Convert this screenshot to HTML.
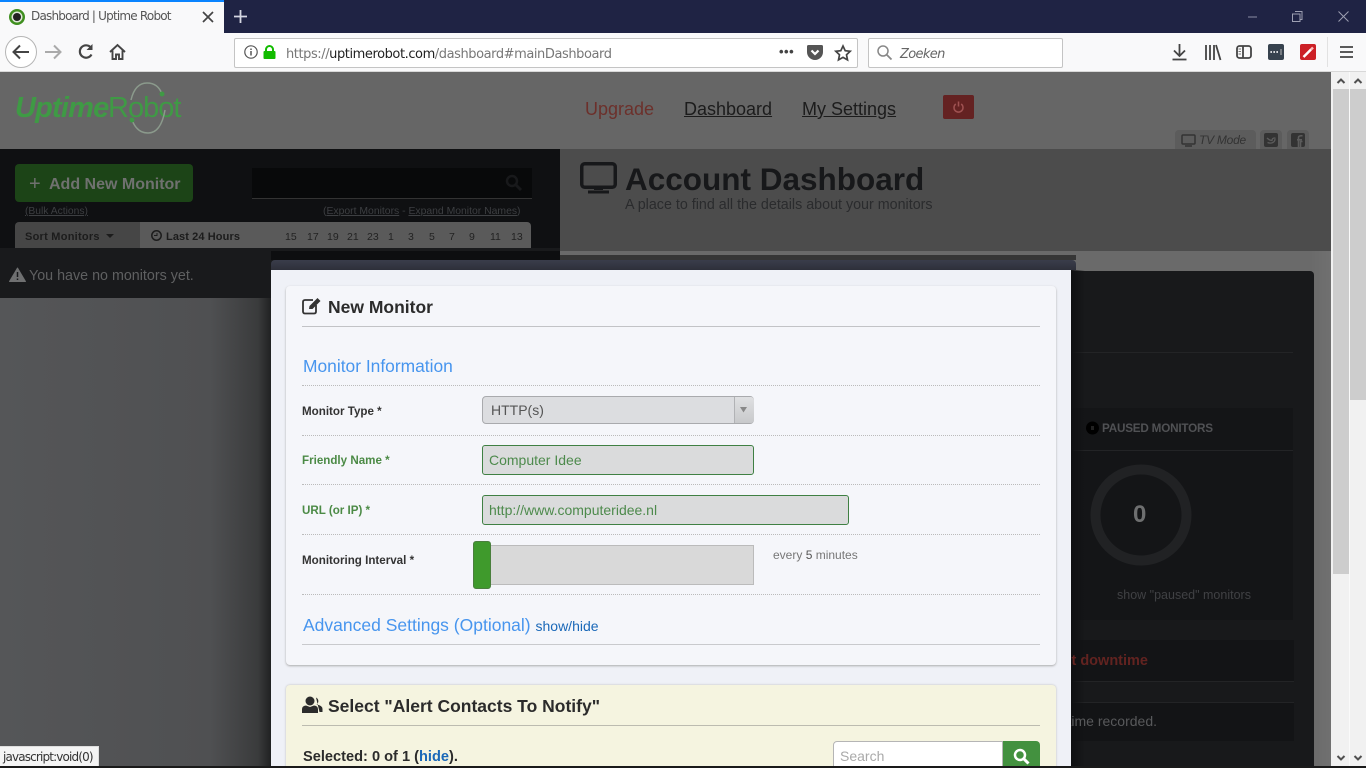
<!DOCTYPE html>
<html><head><meta charset="utf-8"><title>Dashboard | Uptime Robot</title>
<style>
html,body{margin:0;padding:0;width:1366px;height:768px;overflow:hidden;background:#666;font-family:"Liberation Sans",sans-serif}
#r{position:relative;width:1366px;height:768px;overflow:hidden}
.a{position:absolute}
.t{position:absolute;white-space:nowrap;line-height:1}
svg{position:absolute;overflow:visible}
.dot{position:absolute;left:302px;width:738px;height:0;border-top:1px dotted #bbb}
.n{position:absolute;top:232px;line-height:1;font-size:10.5px;color:#222}
</style></head><body><div id="r">

<!-- browser chrome -->
<div class="a" style="left:0;top:0;width:1366px;height:33px;background:#1f2344"></div>
<div class="a" style="left:0;top:0;width:224px;height:33px;background:#f9f9fa"></div>
<div class="a" style="left:0;top:0;width:224px;height:2px;background:#0a84ff"></div>
<div class="a" style="left:0;top:33px;width:1366px;height:39px;background:#f9f9fa"></div>
<div class="a" style="left:0;top:71px;width:1366px;height:1px;background:#d8d8d8"></div>

<svg style="left:9px;top:9px" width="16" height="16"><circle cx="8" cy="8" r="8" fill="#3f8f1f"/><circle cx="8" cy="8" r="5.5" fill="#dfe8d8"/><circle cx="8" cy="8" r="4" fill="#222"/></svg>
<div class="t" style="left:31px;top:10px;font-size:12px;color:#555;font-family:'DejaVu Sans',sans-serif;letter-spacing:-.8px">Dashboard | Uptime Robot</div>
<svg style="left:203px;top:12px" width="10" height="10"><path d="M0 0L10 10M10 0L0 10" stroke="#444" stroke-width="1.7"/></svg>
<svg style="left:234px;top:10px" width="13" height="13"><path d="M6.500 0V13M0 6.500H13" stroke="#d5d7e2" stroke-width="1.800"/></svg>

<svg style="left:1248px;top:16px" width="10" height="2"><path d="M0 1H9" stroke="#8b8da3"/></svg>
<svg style="left:1292px;top:11px" width="11" height="11"><path d="M3 .5H10V8.500H8M.5 3H8V10.500H.5Z" stroke="#9d9fb2" fill="none"/></svg>
<svg style="left:1338px;top:11px" width="11" height="11"><path d="M.5 .5L10.500 10.500M10.500 .5L.5 10.500" stroke="#9d9fb2"/></svg>

<!-- nav -->
<svg style="left:5px;top:36px" width="32" height="32"><circle cx="16" cy="16" r="15.500" fill="#fff" stroke="#b5b5b5"/><path d="M24 16H9M15 9.500L8.500 16L15 22.500" fill="none" stroke="#444" stroke-width="2"/></svg>
<svg style="left:45px;top:44px" width="17" height="16"><path d="M0 8H15M9 1.500L15.500 8L9 14.500" fill="none" stroke="#aaa" stroke-width="2"/></svg>
<svg style="left:78px;top:44px" width="16" height="16"><path d="M13.500 10.500A6.200 6.200 0 1 1 12.800 3.500" fill="none" stroke="#444" stroke-width="2.200"/><path d="M14.500 0V6H8.500Z" fill="#444"/></svg>
<svg style="left:109px;top:44px" width="17" height="16"><path d="M1 8L8.500 1L16 8M3.500 6.500V15H7V10.500H10V15H13.500V6.500" fill="none" stroke="#444" stroke-width="1.900"/></svg>

<div class="a" style="left:234px;top:38px;width:622px;height:28px;background:#fff;border:1px solid #c4c4c4;border-radius:2px"></div>
<svg style="left:244px;top:45px" width="14" height="14"><circle cx="7" cy="7" r="6.200" fill="none" stroke="#555" stroke-width="1.200"/><path d="M7 6V10.500M7 3.500V5" stroke="#555" stroke-width="1.500"/></svg>
<svg style="left:263px;top:45px" width="13" height="14"><path d="M3 6V4.500A3.500 3.500 0 0 1 10 4.500V6" fill="none" stroke="#12bc00" stroke-width="2"/><rect x="0.500" y="6" width="12" height="8" rx="1" fill="#12bc00"/></svg>
<div class="t" style="left:286px;top:48px;font-size:13px;font-family:'DejaVu Sans',sans-serif;letter-spacing:-.43px;color:#777">https://<span style="color:#222">uptimerobot.com</span>/dashboard#mainDashboard</div>
<div class="t" style="left:779px;top:45px;font-size:13px;font-weight:bold;color:#444;letter-spacing:.5px">•••</div>
<svg style="left:807px;top:45px" width="16" height="15"><path d="M1.500 0H14.500A1.500 1.500 0 0 1 16 1.500V7A8 8 0 0 1 0 7V1.500A1.500 1.500 0 0 1 1.500 0Z" fill="#555"/><path d="M4.500 5.500L8 9L11.500 5.500" fill="none" stroke="#fff" stroke-width="2.200"/></svg>
<svg style="left:835px;top:45px" width="16" height="16"><path d="M8 1L10.200 5.700L15.200 6.300L11.500 9.800L12.500 14.900L8 12.400L3.500 14.900L4.500 9.800L.8 6.300L5.800 5.700Z" fill="none" stroke="#444" stroke-width="1.700"/></svg>

<div class="a" style="left:868px;top:38px;width:193px;height:28px;background:#fff;border:1px solid #c4c4c4;border-radius:2px"></div>
<svg style="left:877px;top:45px" width="15" height="15"><circle cx="6" cy="6" r="5" fill="none" stroke="#888" stroke-width="1.500"/><path d="M9.500 9.500L14.500 14.500" stroke="#888" stroke-width="1.800"/></svg>
<div class="t" style="left:900px;top:48px;font-size:13px;font-style:italic;font-family:'DejaVu Sans',sans-serif;letter-spacing:-.65px;color:#666">Zoeken</div>

<svg style="left:1172px;top:44px" width="15" height="17"><path d="M7.500 0V11M2 6.500L7.500 12L13 6.500" fill="none" stroke="#444" stroke-width="1.800"/><path d="M.5 15.500H14.500" stroke="#444" stroke-width="1.800"/></svg>
<svg style="left:1205px;top:45px" width="16" height="15"><path d="M1 0V15M5 0V15M9 0V15M11 0L15.500 15" stroke="#444" stroke-width="1.800"/></svg>
<svg style="left:1236px;top:45px" width="16" height="14"><rect x="1" y="1" width="14" height="12" rx="2.500" fill="none" stroke="#444" stroke-width="1.800"/><path d="M7 1V13" stroke="#444" stroke-width="1.800"/><path d="M2.500 4H5M2.500 6.500H5M2.500 9H5" stroke="#777"/></svg>
<svg style="left:1268px;top:44px" width="16" height="16"><rect width="16" height="16" rx="2" fill="#37424e"/><path d="M2.500 8H3.800M5.500 8H6.800M8.500 8H9.800" stroke="#fff" stroke-width="2"/><path d="M13 5V11" stroke="#bbb"/></svg>
<svg style="left:1300px;top:44px" width="16" height="16"><rect width="16" height="16" rx="2" fill="#cc2026"/><path d="M3.500 13L11 5.500" stroke="#fff" stroke-width="2.500"/><path d="M11 5.500L13 3.500" stroke="#fbb" stroke-width="2.500"/></svg>
<div class="a" style="left:1327px;top:37px;width:1px;height:30px;background:#e2e2e2"></div>
<svg style="left:1340px;top:46px" width="13" height="12"><path d="M0 1H13M0 6H13M0 11H13" stroke="#444" stroke-width="1.700"/></svg>

<!-- dimmed page -->
<div class="a" style="left:0;top:72px;width:1331px;height:696px;background:#666"></div>
<div class="t" style="left:15px;top:94px;font-size:29px;font-weight:bold;font-style:italic;color:#3f9a45;letter-spacing:-.8px">Uptime</div>
<div class="t" style="left:108px;top:94px;font-size:29px;color:#3f9a45;letter-spacing:-1px">Robot</div>
<svg style="left:125px;top:82px" width="44" height="52"><path d="M6 18Q10 1 22 1Q33 1 37 12M7 38Q12 51 23 51Q36 51 40 28" fill="none" stroke="#8b9a8c" stroke-width="1.500"/><circle cx="37" cy="12" r="2.500" fill="#3f9a45"/><circle cx="7" cy="38" r="2.500" fill="#3f9a45"/></svg>

<div class="t" style="left:585px;top:100px;font-size:18px;color:#6c302b">Upgrade</div>
<div class="t" style="left:684px;top:100px;font-size:18px;color:#1c1c1c;text-decoration:underline">Dashboard</div>
<div class="t" style="left:802px;top:100px;font-size:18px;color:#1c1c1c;text-decoration:underline">My Settings</div>
<div class="a" style="left:943px;top:95px;width:31px;height:24px;background:#642222;border-radius:2px"></div>
<svg style="left:953px;top:101px" width="11" height="12"><path d="M2.800 3A4.500 4.500 0 1 0 8.200 3" fill="none" stroke="#a05252" stroke-width="1.500"/><path d="M5.500 .5V5.500" stroke="#a05252" stroke-width="1.500"/></svg>

<div class="a" style="left:1175px;top:130px;width:81px;height:19px;background:#5c5c5c;border-radius:4px 4px 0 0"></div>
<svg style="left:1181px;top:134px" width="15" height="13"><rect x="1" y="1" width="13" height="9" rx="1" fill="none" stroke="#333" stroke-width="1.500"/><path d="M4 12H11" stroke="#333" stroke-width="1.500"/></svg>
<div class="t" style="left:1199px;top:134px;font-size:12px;font-style:italic;color:#333;letter-spacing:-.25px">TV Mode</div>
<div class="a" style="left:1260px;top:130px;width:22px;height:19px;background:#5c5c5c;border-radius:4px 4px 0 0"></div>
<div class="a" style="left:1287px;top:130px;width:22px;height:19px;background:#5c5c5c;border-radius:4px 4px 0 0"></div>
<svg style="left:1264px;top:133px" width="14" height="14"><rect width="14" height="14" rx="2" fill="#333"/><path d="M3 5C5 7 7 7.500 8 7.500C8 5 10.500 4.500 11.500 5.500M3.500 9.500C7 11 11 9.500 11 6" fill="none" stroke="#5c5c5c" stroke-width="1.300"/></svg>
<svg style="left:1291px;top:133px" width="14" height="14"><rect width="14" height="14" rx="2" fill="#333"/><path d="M9.500 14V8.500H11.500M7.500 14V4.500Q7.500 2.500 11.500 2.800M6 6.800H11" fill="none" stroke="#5c5c5c" stroke-width="1.600"/></svg>

<!-- sidebar -->
<div class="a" style="left:0;top:149px;width:560px;height:149px;background:#0f1012"></div>
<div class="a" style="left:15px;top:164px;width:178px;height:38px;background:#1c4417;border-radius:4px"></div>
<div class="t" style="left:29px;top:175px;font-size:16px;font-weight:bold;color:#6f716f;margin-top:-2px"><span style="font-weight:normal;font-size:20px;position:relative;top:1px">+</span>&nbsp; Add New Monitor</div>
<div class="a" style="left:252px;top:168px;width:280px;height:30px;background:#08090a;border-bottom:1px solid #333"></div>
<svg style="left:505px;top:174px" width="17" height="17"><circle cx="7" cy="7" r="5" fill="none" stroke="#18191b" stroke-width="2.500"/><path d="M11 11L16 16" stroke="#18191b" stroke-width="3"/></svg>
<div class="t" style="left:25px;top:207px;font-size:10.3px;color:#3d3f42;text-decoration:underline">(Bulk Actions)</div>
<div class="t" style="left:323px;top:207px;font-size:10.4px;color:#3d3f42">(<u>Export Monitors</u> - <u>Expand Monitor Names</u>)</div>
<div class="a" style="left:15px;top:222px;width:125px;height:26px;background:#464646;border-radius:4px 0 0 0"></div>
<div class="a" style="left:140px;top:222px;width:391px;height:26px;background:#5a5a5a;border-radius:0 4px 0 0"></div>
<div class="t" style="left:25px;top:232px;font-size:11px;font-weight:bold;color:#1c1c1c;letter-spacing:.25px">Sort Monitors</div>
<svg style="left:106px;top:234px" width="8" height="5"><path d="M0 0H8L4 4Z" fill="#1c1c1c"/></svg>
<svg style="left:151px;top:230px" width="11" height="11"><circle cx="5.500" cy="5.500" r="4.700" fill="none" stroke="#1c1c1c" stroke-width="1.500"/><path d="M3 5.500H6V3" fill="none" stroke="#1c1c1c"/></svg>
<div class="t" style="left:166px;top:232px;font-size:11px;font-weight:bold;color:#1c1c1c;letter-spacing:.1px">Last 24 Hours</div>
<div class="n" style="left:285px">15</div>
<div class="n" style="left:307px">17</div>
<div class="n" style="left:327px">19</div>
<div class="n" style="left:347px">21</div>
<div class="n" style="left:367px">23</div>
<div class="n" style="left:388px">1</div>
<div class="n" style="left:408px">3</div>
<div class="n" style="left:429px">5</div>
<div class="n" style="left:449px">7</div>
<div class="n" style="left:469px">9</div>
<div class="n" style="left:490px">11</div>
<div class="n" style="left:511px">13</div>
<div class="a" style="left:0;top:248px;width:560px;height:50px;background:#191a1c"></div>
<svg style="left:9px;top:267px" width="17" height="15"><path d="M8.500 1L16.500 14.500H.5Z" fill="#6f7071" stroke="#6f7071" stroke-linejoin="round"/><path d="M8.500 5V10M8.500 11.500V13" stroke="#191a1c" stroke-width="1.500"/></svg>
<div class="t" style="left:29px;top:269px;font-size:14.3px;color:#5f6061">You have no monitors yet.</div>
<div class="a" style="left:0;top:298px;width:271px;height:470px;background:linear-gradient(90deg,#555658 0,#4f5052 210px,#3a3b3c 258px,#202122 271px)"></div>

<!-- main -->
<div class="a" style="left:560px;top:149px;width:771px;height:102px;background:#4c4c4c"></div>
<div class="a" style="left:560px;top:251px;width:771px;height:517px;background:linear-gradient(90deg,#6a6a6a 0,#6a6a6a 750px,#707070 771px)"></div>
<svg style="left:580px;top:162px" width="37" height="32"><rect x="1.750" y="1.750" width="33.500" height="23.500" rx="3" fill="none" stroke="#17181a" stroke-width="3.500"/><path d="M8 30H29" stroke="#17181a" stroke-width="3"/><path d="M14 27H23" stroke="#17181a" stroke-width="2"/></svg>
<div class="t" style="left:625px;top:164px;font-size:31.5px;font-weight:bold;color:#17181a">Account Dashboard</div>
<div class="t" style="left:625px;top:198px;font-size:14.3px;color:#2a2b2d">A place to find all the details about your monitors</div>

<!-- dark panel -->
<div class="a" style="left:1060px;top:271px;width:254px;height:497px;background:#18191b;border-radius:0 4px 0 0"></div>
<div class="a" style="left:1071px;top:352px;width:222px;height:1px;background:#232426"></div>
<div class="a" style="left:1071px;top:408px;width:222px;height:212px;background:#141517"></div>
<div class="a" style="left:1071px;top:450px;width:222px;height:1px;background:#232426"></div>
<div class="a" style="left:1060px;top:640px;width:234px;height:41px;background:#131416;border-bottom:1px solid #232426"></div>
<div class="a" style="left:1060px;top:702px;width:234px;height:38px;background:#131416;border-top:1px solid #232426"></div>
<div class="a" style="left:1071px;top:270px;width:14px;height:498px;background:linear-gradient(90deg,#0f1012,rgba(24,25,27,0))"></div>
<svg style="left:1086px;top:421px" width="13" height="14"><circle cx="6.500" cy="7" r="6.500" fill="#000"/><rect x="5" y="5" width="3" height="4" fill="#222"/></svg>
<div class="t" style="left:1102px;top:423px;font-size:11.7px;font-weight:bold;color:#505154;letter-spacing:-.2px">PAUSED MONITORS</div>
<svg style="left:1090px;top:464px" width="102" height="102"><circle cx="51" cy="51" r="45.500" fill="none" stroke="#212224" stroke-width="10"/></svg>
<div class="t" style="left:1133px;top:503px;font-size:24px;font-weight:bold;color:#6e6f70">0</div>
<div class="t" style="left:1117px;top:589px;font-size:12.5px;color:#404144">show "paused" monitors</div>
<div class="t" style="right:218px;top:654px;font-size:14.5px;font-weight:bold;color:#622320">t downtime</div>
<div class="t" style="right:209px;top:714px;font-size:14px;color:#58595b">time recorded.</div>

<!-- modal -->
<div class="a" style="left:560px;top:255px;width:516px;height:5px;background:#363636"></div>
<div class="a" style="left:271px;top:251px;width:289px;height:9px;background:#0d0e10"></div>
<div class="a" style="left:271px;top:260px;width:805px;height:10px;background:linear-gradient(#3a3d4b,#2e303a);border-radius:4px 4px 0 0"></div>
<div class="a" style="left:271px;top:270px;width:800px;height:498px;background:#eff1f7"></div>
<div class="a" style="left:286px;top:286px;width:770px;height:379px;background:#f5f6fa;border-radius:4px;box-shadow:0 1px 2px #aaa"></div>

<svg style="left:302px;top:297px" width="21" height="18"><path d="M14 8V14.500Q14 16.500 12 16.500H3Q1 16.500 1 14.500V5Q1 3 3 3H11" fill="none" stroke="#333" stroke-width="1.800"/><path d="M7 12L7.500 9L15.500 1L18.500 4L10.500 12Z" fill="#333"/></svg>
<div class="t" style="left:328px;top:299px;font-size:17.5px;font-weight:bold;color:#2b2b2b">New Monitor</div>
<div class="a" style="left:302px;top:326px;width:738px;height:1px;background:#c2c3c6"></div>
<div class="t" style="left:303px;top:358px;font-size:17.4px;color:#4795ee">Monitor Information</div>
<div class="dot" style="top:385px"></div>
<div class="t" style="left:302px;top:406px;font-size:11.6px;font-weight:bold;color:#333">Monitor Type *</div>
<div class="a" style="left:482px;top:396px;width:270px;height:26px;background:#dcdde0;border:1px solid #a9aaad;border-radius:4px"></div>
<div class="a" style="left:734px;top:397px;width:19px;height:26px;border-left:1px solid #b1b2b5;background:linear-gradient(#dfe0e2,#c8c9cb);border-radius:0 3px 3px 0"></div>
<svg style="left:740px;top:407px" width="7" height="6"><path d="M0 0H7L3.500 5.500Z" fill="#888"/></svg>
<div class="t" style="left:491px;top:403px;font-size:14px;color:#555">HTTP(s)</div>
<div class="dot" style="top:435px"></div>
<div class="t" style="left:302px;top:455px;font-size:11.6px;font-weight:bold;color:#4b8a45">Friendly Name *</div>
<div class="a" style="left:482px;top:445px;width:270px;height:28px;background:#dadbdc;border:1px solid #3f8043;border-radius:3px"></div>
<div class="t" style="left:489px;top:453px;font-size:14px;color:#4d8a4c">Computer Idee</div>
<div class="dot" style="top:484px"></div>
<div class="t" style="left:302px;top:505px;font-size:11.6px;font-weight:bold;color:#4b8a45">URL (or IP) *</div>
<div class="a" style="left:482px;top:495px;width:365px;height:28px;background:#dadbdc;border:1px solid #3f8043;border-radius:3px"></div>
<div class="t" style="left:489px;top:503px;font-size:14px;color:#4d8a4c">http://www.computeridee.nl</div>
<div class="dot" style="top:534px"></div>
<div class="t" style="left:302px;top:555px;font-size:11.6px;font-weight:bold;color:#333">Monitoring Interval *</div>
<div class="a" style="left:485px;top:545px;width:267px;height:38px;background:#d9d9d9;border:1px solid #bbb"></div>
<div class="a" style="left:473px;top:541px;width:18px;height:48px;background:#3f9a2c;border-radius:3px;box-sizing:border-box;border:1px solid #4a7f3d"></div>
<div class="t" style="left:773px;top:549px;font-size:12px;color:#777">every <span style="color:#555">5</span> minutes</div>
<div class="dot" style="top:594px"></div>
<div class="t" style="left:303px;top:617px;font-size:17.5px;color:#4795ee">Advanced Settings (Optional) <span style="font-size:14px;color:#1a68b8">show/hide</span></div>
<div class="a" style="left:302px;top:644px;width:738px;height:1px;background:#c9cacd"></div>

<div class="a" style="left:286px;top:685px;width:770px;height:83px;background:#f5f4e0;border-radius:4px 4px 0 0;box-shadow:0 0 2px #bbb"></div>
<svg style="left:302px;top:696px" width="21" height="18"><circle cx="8" cy="5" r="4.500" fill="#2b2b2b"/><path d="M0 17V13Q0 10 4 9.500L8 11L12 9.500Q16 10 16 13V17Z" fill="#2b2b2b"/><path d="M14 1.500A4 4 0 0 1 14.500 8.500Q20.500 9.500 20.500 13V16H17.500" fill="#2b2b2b"/></svg>
<div class="t" style="left:328px;top:698px;font-size:17.5px;font-weight:bold;color:#2b2b2b">Select "Alert Contacts To Notify"</div>
<div class="a" style="left:302px;top:725px;width:738px;height:1px;background:#bcbbb0"></div>
<div class="t" style="left:303px;top:750px;font-size:14.6px;font-weight:bold;color:#2b2b2b">Selected: 0 of 1 (<span style="color:#1a68b8">hide</span>).</div>
<div class="a" style="left:833px;top:741px;width:170px;height:30px;background:#fff;border:1px solid #b5b5b5;border-radius:4px 0 0 0;box-sizing:border-box"></div>
<div class="t" style="left:840px;top:749px;font-size:14px;color:#aaa">Search</div>
<div class="a" style="left:1003px;top:741px;width:37px;height:30px;background:#43913f;border-radius:0 4px 0 0"></div>
<svg style="left:1013px;top:748px" width="17" height="17"><circle cx="7" cy="7" r="5" fill="none" stroke="#fff" stroke-width="2.500"/><path d="M10.500 10.500L15.500 15.500" stroke="#fff" stroke-width="3"/></svg>

<!-- scrollbars -->
<div class="a" style="left:1331px;top:72px;width:35px;height:696px;background:#f1f1f1"></div>
<div class="a" style="left:1333px;top:89px;width:16px;height:485px;background:#cdcdcd"></div>
<div class="a" style="left:1350px;top:89px;width:16px;height:311px;background:#cdcdcd"></div>
<div class="a" style="left:1349px;top:72px;width:1px;height:696px;background:#fafafa"></div>
<svg style="left:1337px;top:78px" width="8" height="6"><path d="M.5 5L4 1.500L7.500 5" fill="none" stroke="#505050" stroke-width="2"/></svg>
<svg style="left:1354px;top:78px" width="8" height="6"><path d="M.5 5L4 1.500L7.500 5" fill="none" stroke="#505050" stroke-width="2"/></svg>
<svg style="left:1337px;top:755px" width="8" height="6"><path d="M.5 1L4 4.500L7.500 1" fill="none" stroke="#505050" stroke-width="2"/></svg>
<svg style="left:1354px;top:755px" width="8" height="6"><path d="M.5 1L4 4.500L7.500 1" fill="none" stroke="#505050" stroke-width="2"/></svg>

<!-- bottom line + status -->
<div class="a" style="left:0;top:766px;width:1366px;height:2px;background:#1a1a1a"></div>
<div class="a" style="left:0;top:746px;width:99px;height:20px;background:#f4f4f4;border:1px solid #ddd;border-width:1px 1px 0 0;box-sizing:border-box"></div>
<div class="t" style="left:3px;top:751px;font-size:12px;font-family:'DejaVu Sans',sans-serif;letter-spacing:-.85px;color:#333">javascript:void(0)</div>
</div></body></html>
